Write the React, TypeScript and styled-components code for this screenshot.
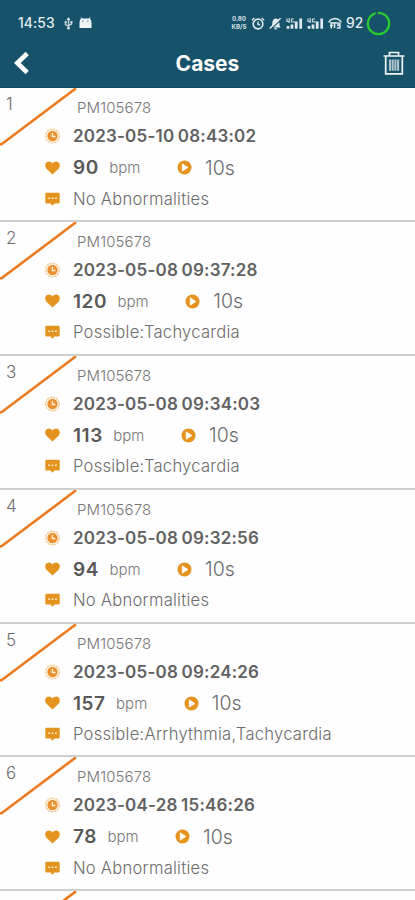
import React from "react";
import styled, { createGlobalStyle } from "styled-components";

const GlobalStyle = createGlobalStyle`
  * { box-sizing: border-box; }
  html, body { margin: 0; padding: 0; background: #fefefe; }
  body { font-family: Inter, "Liberation Sans", sans-serif; overflow: hidden; }
`;

const Screen = styled.div`
  width: 415px;
  height: 900px;
  overflow: hidden;
  background: #fefefe;
`;
const Header = styled.header`
  height: 88px;
  background: #17526b;
  color: #fff;
  border-bottom: 1px solid #0f4962;
`;
const StatusBar = styled.div`
  height: 46px;
  padding: 0 24px 0 18px;
  display: flex;
  align-items: center;
  justify-content: space-between;
`;
const StatusGroup = styled.div<{ $gap: number }>`
  display: flex;
  align-items: center;
  gap: ${(p) => p.$gap}px;
  svg { display: block; flex: none; }
`;
const Time = styled.span`
  font-size: 13.8px;
  font-weight: 500;
  letter-spacing: 0.1px;
  color: #e4edf1;
  margin-right: 3px;
`;
const Speed = styled.span`
  display: flex;
  flex-direction: column;
  align-items: center;
  width: 16px;
  font-size: 6.2px;
  font-weight: 700;
  line-height: 8px;
  height: 16px;
  color: #d3e0e6;
  white-space: nowrap;
`;
const Battery = styled.span`
  width: 17px;
  margin-right: -1px;
  font-size: 13.8px;
  font-weight: 500;
  color: #e4edf1;
`;
const NavBar = styled.nav`
  height: 34px;
  display: grid;
  grid-template-columns: 40px 1fr 40px;
  align-items: center;
`;
const NavButton = styled.button<{ $end?: boolean }>`
  display: flex;
  justify-content: ${(p) => (p.$end ? "flex-end" : "flex-start")};
  padding: ${(p) => (p.$end ? "0 10px 0 0" : "0 0 0 14px")};
  border: 0;
  background: none;
  color: inherit;
`;
const Title = styled.h1`
  margin: 1px 0 0;
  text-align: center;
  font-size: 21px;
  font-weight: 700;
  line-height: 26px;
`;
const CaseRow = styled.article`
  position: relative;
  height: 133.9px;
  display: grid;
  grid-template-columns: 45px 1fr;
  border-bottom: 2px solid #cfcfcf;
`;
const Slash = styled.svg`
  position: absolute;
  left: 0;
  top: 0;
`;
const Index = styled.span`
  padding: 6px 0 0 6px;
  font-size: 17px;
  line-height: 20px;
  font-weight: 300;
  color: #6c6c6c;
`;
const Details = styled.div`
  padding-top: 10px;
`;
const Code = styled.div`
  height: 22px;
  padding-left: 32px;
  font-size: 15px;
  font-weight: 300;
  line-height: 20px;
  color: #777;
  letter-spacing: 0.12px;
`;
const Line = styled.div<{ $height: number }>`
  height: ${(p) => p.$height}px;
  display: flex;
  align-items: center;
  white-space: nowrap;
  svg { display: block; flex: none; }
`;
const IconSlot = styled.span`
  width: 28px;
  flex: none;
`;
const DateText = styled.span`
  font-size: 17px;
  font-weight: 600;
  letter-spacing: 0.2px;
  word-spacing: -1px;
  color: #616161;
`;
const Rate = styled.span`
  font-size: 19px;
  font-weight: 600;
  letter-spacing: 0.55px;
  color: #585858;
`;
const Unit = styled.span`
  margin: 0 36.5px 0 10.5px;
  font-size: 15px;
  font-weight: 300;
  color: #777;
`;
const Duration = styled.span`
  margin-left: 13px;
  font-size: 19.5px;
  font-weight: 300;
  color: #6c6c6c;
`;
const Result = styled.span`
  font-size: 16.6px;
  font-weight: 300;
  letter-spacing: 0.24px;
  color: #6c6c6c;
`;

const ORANGE = "#e4931f";

const ClockIcon = () => (
  <svg width="16" height="16" viewBox="0 0 16 16">
    <circle cx="7.5" cy="8" r="6.8" fill="none" stroke="#f5cfa0" strokeWidth="1.5" strokeDasharray="2.6 0.6" />
    <circle cx="7.5" cy="8" r="5.2" fill="#ea9130" />
    <path d="M7.4 4.8v3.7h3" fill="none" stroke="#fff3df" strokeWidth="1.3" />
  </svg>
);
const HeartIcon = () => (
  <svg width="15" height="14" viewBox="0 0 15 14">
    <path d="M7.5 13.6 1.2 7.5C-.8 4.8.3.8 3.7.6c1.800 0 3 .8 3.800 2C8.300 1.400 9.500.6 11.300.6c3.400.2 4.500 4.200 2.500 6.900Z" fill={ORANGE} />
  </svg>
);
const MessageIcon = () => (
  <svg width="15" height="14" viewBox="0 0 15 14">
    <path d="M1.500.8h12q1.200 0 1.200 1.200v8.200q0 1.200-1.200 1.200H9.500L7.500 13.700 5.500 11.400H1.500Q.3 11.400.3 10.200V2Q.3.8 1.500.8Z" fill={ORANGE} />
    <path d="M3.200 6.200h1.700M6.650 6.200h1.700M10.100 6.200h1.700" stroke="#fff0d8" strokeWidth="1.500" />
  </svg>
);
const PlayIcon = () => (
  <svg width="15" height="15" viewBox="0 0 15 15">
    <circle cx="7.500" cy="7.500" r="7" fill={ORANGE} />
    <path d="M5.200 3.800 11 7.500 5.200 11.200Z" fill="#fff" stroke="#fff" strokeWidth="0.600" strokeLinejoin="round" />
  </svg>
);
const UsbIcon = () => (
  <svg width="9" height="13" viewBox="0 0 9 13">
    <path d="M4.500 2v10M1.500 5v2.500l3 2M7.500 5v2l-3 1.500" fill="none" stroke="#bfd0d8" strokeWidth="1.500" />
    <path d="m2.600 3 1.900-3 1.900 3Z" fill="#dce8ed" />
    <circle cx="4.500" cy="11.300" r="1.300" fill="#dce8ed" />
    <circle cx="1.700" cy="5" r="1.200" fill="#bfd0d8" />
    <path d="M6.300 4h2.200v2H6.300z" fill="#bfd0d8" />
  </svg>
);
const AndroidIcon = () => (
  <svg width="13" height="12" viewBox="0 0 13 12">
    <path d="M.5 11V6Q.7 2 2.500 1.500h8Q12.300 2 12.500 6v5Z" fill="#f0f6f8" />
    <path d="M2 .4 3.500 2.500M11 .4 9.500 2.500" stroke="#e5eef2" />
    <path d="M3.900 3.300v2M8.900 3.300v2" stroke="#7696a4" strokeWidth="1.100" />
  </svg>
);
const AlarmIcon = () => (
  <svg width="14" height="13" viewBox="0 0 14 13">
    <circle cx="7" cy="7" r="4.800" fill="none" stroke="#dce7ec" strokeWidth="1.700" />
    <path d="M7 4.500V7.200l2 .8M.8 3.300 3.400 1M13.200 3.300 10.600 1" fill="none" stroke="#dce7ec" strokeWidth="1.400" />
  </svg>
);
const MutedIcon = () => (
  <svg width="13" height="13" viewBox="0 0 13 13">
    <path d="M2 10.500c1.200-1 1.300-2 1.300-4.200C3.300 3 5 1.500 6.800 1.500s3 .9 3.300 3c.4 3 .4 5 1.500 6Z" fill="#e4edf1" />
    <path d="M5.300 11.800h2.800" stroke="#e4edf1" strokeWidth="1.200" />
    <path d="M2 12 12.800 2.200" stroke="#17526b" strokeWidth="1.100" />
    <path d="M.7 11.500 11.600 1.200" stroke="#e4edf1" strokeWidth="1.400" />
  </svg>
);
const SignalIcon = () => (
  <svg width="17" height="13" viewBox="0 0 17 13">
    <path d="M2 11.700v-2.700M6 11.700v-4.200M10.200 11.700v-7.200M14.700 11.700v-10.200" stroke="#dfe9ee" strokeWidth="2.700" />
    <path d="M1 1.500v3h3M3.200 1v5M8 2H5.500v3H8V4" fill="none" stroke="#c7d7de" strokeWidth="1.200" />
  </svg>
);
const HomeWifiIcon = () => (
  <svg width="14" height="13" viewBox="0 0 14 13">
    <path d="M1 5.500Q2 2 7 1.500q5 .5 6 4M3.200 5v6.500M3 6h8.500M6.500 5v6M9 8.200h2.800V6M8.800 11h3V8.200M5 8.500H2" fill="none" stroke="#d6e3e9" strokeWidth="1.700" />
  </svg>
);
const ChargeRing = () => (
  <svg width="25" height="25" viewBox="0 0 25 25">
    <circle cx="12.500" cy="12.500" r="10.700" fill="none" stroke="#2bca30" strokeWidth="2.300" strokeDasharray="64.500 2.730" transform="rotate(-94 12.500 12.500)" />
  </svg>
);
const BackIcon = () => (
  <svg width="16" height="24" viewBox="0 0 16 24">
    <path d="M13.200 2.500 3.300 12l9.900 9.500" fill="none" stroke="#fff" strokeWidth="4.600" />
  </svg>
);
const TrashIcon = () => (
  <svg width="22" height="25" viewBox="0 0 22 25">
    <path d="M.5 5h21M6.500 4.500V1.500h9v3M2.700 5.500v17.300h16.600V5.500" fill="none" stroke="#f0f6f8" strokeWidth="1.700" />
    <path d="M7 8.500v11.200M9.700 8.500v11.200M12.400 8.500v11.200M15.100 8.500v11.200" stroke="#aec2cb" strokeWidth="2.100" />
  </svg>
);

const CASES = [
  { date: "2023-05-10", time: "08:43:02", bpm: 90, result: "No Abnormalities" },
  { date: "2023-05-08", time: "09:37:28", bpm: 120, result: "Possible:Tachycardia" },
  { date: "2023-05-08", time: "09:34:03", bpm: 113, result: "Possible:Tachycardia" },
  { date: "2023-05-08", time: "09:32:56", bpm: 94, result: "No Abnormalities" },
  { date: "2023-05-08", time: "09:24:26", bpm: 157, result: "Possible:Arrhythmia,Tachycardia" },
  { date: "2023-04-28", time: "15:46:26", bpm: 78, result: "No Abnormalities" },
];

const SlashMark = () => (
  <Slash width="78" height="58" viewBox="0 0 78 58">
    <path d="M0 56.300h1.500L76 .3" fill="none" stroke="#ec791d" strokeWidth="2.600" />
  </Slash>
);

export default function App() {
  return (
    <Screen>
      <GlobalStyle />
      <Header>
        <StatusBar>
          <StatusGroup $gap={6}>
            <Time>14:53</Time>
            <UsbIcon />
            <AndroidIcon />
          </StatusGroup>
          <StatusGroup $gap={4}>
            <Speed><span>0.80</span><span>KB/S</span></Speed>
            <AlarmIcon />
            <MutedIcon />
            <SignalIcon />
            <SignalIcon />
            <HomeWifiIcon />
            <Battery>92</Battery>
            <ChargeRing />
          </StatusGroup>
        </StatusBar>
        <NavBar>
          <NavButton aria-label="Back"><BackIcon /></NavButton>
          <Title>Cases</Title>
          <NavButton $end aria-label="Delete"><TrashIcon /></NavButton>
        </NavBar>
      </Header>
      <main>
        {CASES.map((item, i) => (
          <CaseRow key={i}>
            <SlashMark />
            <Index>{i + 1}</Index>
            <Details>
              <Code>PM105678</Code>
              <Line $height={32}>
                <IconSlot><ClockIcon /></IconSlot>
                <DateText>{item.date} {item.time}</DateText>
              </Line>
              <Line $height={31}>
                <IconSlot><HeartIcon /></IconSlot>
                <Rate>{item.bpm}</Rate>
                <Unit>bpm</Unit>
                <PlayIcon />
                <Duration>10s</Duration>
              </Line>
              <Line $height={31}>
                <IconSlot><MessageIcon /></IconSlot>
                <Result>{item.result}</Result>
              </Line>
            </Details>
          </CaseRow>
        ))}
        <CaseRow><SlashMark /></CaseRow>
      </main>
    </Screen>
  );
}
